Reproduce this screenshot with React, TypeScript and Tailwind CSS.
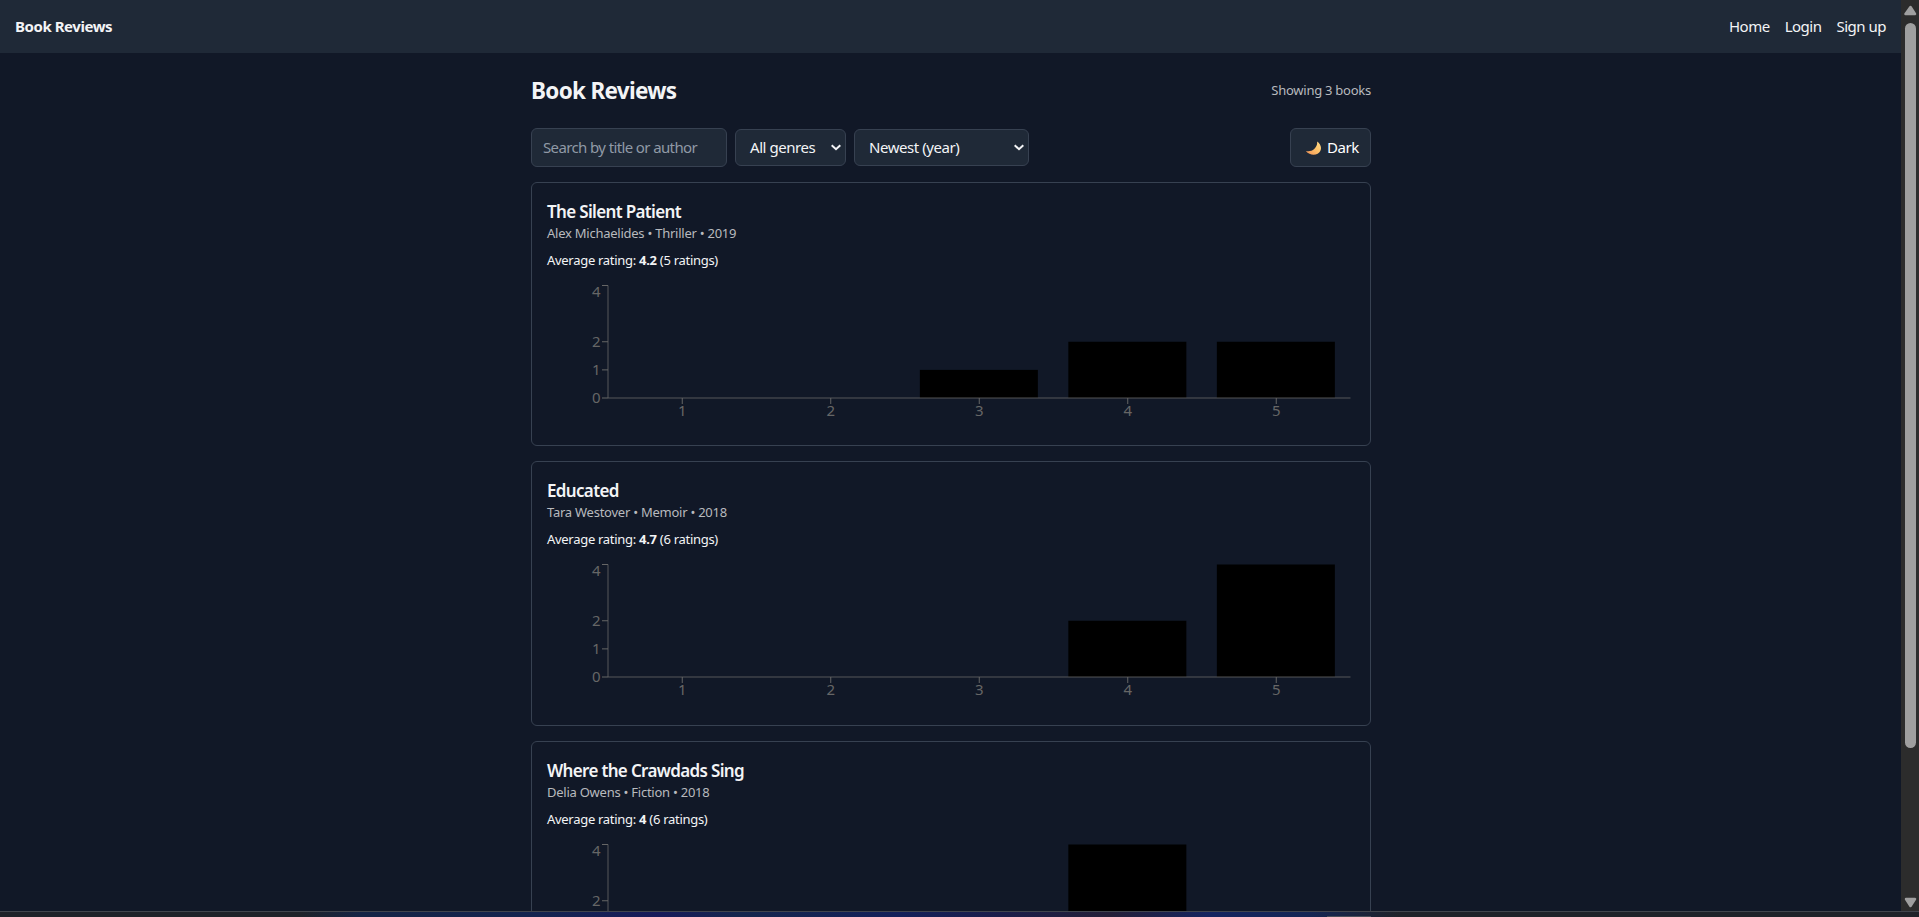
const axisX = 61;
const band = 148.5;

type Book = {
  title: string;
  meta: string;
  average: string;
  count: number;
  ratings: number[];
};

const books: Book[] = [
  { title: "The Silent Patient", meta: "Alex Michaelides • Thriller • 2019", average: "4.2", count: 5, ratings: [0, 0, 1, 2, 2] },
  { title: "Educated", meta: "Tara Westover • Memoir • 2018", average: "4.7", count: 6, ratings: [0, 0, 0, 2, 4] },
  { title: "Where the Crawdads Sing", meta: "Delia Owens • Fiction • 2018", average: "4", count: 6, ratings: [0, 0, 1, 4, 1] },
];

function RatingChart({ ratings }: { ratings: number[] }) {
  const base = 118;
  const unit = 28.125;
  return (
    <svg width="808" height="150" className="block text-[15px]">
      {ratings.map((value, i) => (
        <rect key={i} x={axisX + band * i + 14.85} y={base - value * unit} width={118} height={value * unit} fill="#000" />
      ))}
      <g stroke="#666" fill="none">
        <path d="M61 5.5V118M61 118H803.5" strokeOpacity="0.8" />
        {[0, 1, 2, 4].map((v) => (
          <path key={v} d={`M55 ${base - v * unit}h6`} />
        ))}
        {ratings.map((_, i) => (
          <path key={i} d={`M${axisX + band * (i + 0.5)} 118v6`} />
        ))}
      </g>
      <g fill="#666">
        {[0, 1, 2, 4].map((v) => (
          <text key={v} x="53.5" y={v === 4 ? 17 : base - v * unit + 5} textAnchor="end">{v}</text>
        ))}
        {ratings.map((_, i) => (
          <text key={i} x={axisX + band * (i + 0.5)} y="135.5" textAnchor="middle">{i + 1}</text>
        ))}
      </g>
    </svg>
  );
}

function BookCard({ book }: { book: Book }) {
  return (
    <article className="h-[264.25px] shrink-0 rounded-md border border-[#374151] px-[15px] pt-[17px]">
      <h2 className="text-[17px] leading-[24px] font-semibold tracking-[-0.66px]">{book.title}</h2>
      <p className="text-[13px] leading-[19px] tracking-[-0.25px] text-[#b8babe]">{book.meta}</p>
      <p className="mt-2 text-[13px] leading-[19px] tracking-[-0.29px]">
        Average rating: <strong className="font-bold">{book.average}</strong> ({book.count} ratings)
      </p>
      <div className="mt-[10px]">
        <RatingChart ratings={book.ratings} />
      </div>
    </article>
  );
}

function Chevron() {
  return (
    <svg width="10" height="7" viewBox="0 0 10 7" fill="none" stroke="#f3f4f6" strokeWidth="2">
      <path d="M0.7 1.2L5 5.2L9.3 1.2" />
    </svg>
  );
}

export default function App() {
  return (
    <div className="flex h-[917px] w-[1919px] flex-col overflow-hidden bg-[#111827] font-['Noto_Sans',sans-serif] text-[#f3f4f6]">
      <div className="flex h-[911px] shrink-0">
        <div className="flex w-[1901px] flex-col overflow-hidden">
          <nav className="flex h-[53px] shrink-0 items-center justify-between bg-[#1f2937] px-[15px] text-[15px]">
            <span className="font-bold tracking-[-0.45px]">Book Reviews</span>
            <div className="flex gap-[15px] tracking-[-0.5px]">
              <a>Home</a>
              <a>Login</a>
              <a>Sign up</a>
            </div>
          </nav>
          <main className="ml-[531px] flex w-[840px] flex-col">
            <header className="mt-[21px] flex h-[34px] items-center justify-between">
              <h1 className="text-[22.5px] font-bold tracking-[-0.7px]">Book Reviews</h1>
              <span className="text-[13px] tracking-[-0.25px] text-[#b8babe]">Showing 3 books</span>
            </header>
            <div className="mt-5 flex h-[39px] items-center text-[15px] tracking-[-0.45px]">
              <div className="flex h-[39px] w-[196px] items-center rounded-md border border-[#374151] bg-[#1f2937] px-[11px] text-[#9099a6]">
                <span className="w-[161px] overflow-hidden tracking-[-0.62px] whitespace-nowrap">Search by title or author</span>
              </div>
              <div className="ml-2 flex h-[37px] w-[111px] items-center justify-between rounded-md border border-[#374151] bg-[#1f2937] pr-[4px] pl-[14px]">
                All genres
                <Chevron />
              </div>
              <div className="ml-2 flex h-[37px] w-[175px] items-center justify-between rounded-md border border-[#374151] bg-[#1f2937] pr-[4px] pl-[14px]">
                Newest (year)
                <Chevron />
              </div>
              <button className="ml-auto flex h-[39px] w-[81px] items-center rounded-md border border-[#374151] bg-[#1f2937] pl-[14px] text-white">
                <svg width="17" height="16" viewBox="0 0 17 16">
                  <defs>
                    <linearGradient id="moon" x1="0" y1="1" x2="1" y2="0">
                      <stop offset="0" stopColor="#ef8f55" />
                      <stop offset="0.6" stopColor="#ffc66b" />
                      <stop offset="1" stopColor="#ffd98a" />
                    </linearGradient>
                  </defs>
                  <path d="M12 1.600C15.600 3.800 17 7.700 15.300 11C13.400 15.200 5.500 16.600 0.800 11C3.800 11.600 7 11.200 9.200 9C11.600 6.900 12.600 4.300 12 1.600Z" fill="url(#moon)" />
                </svg>
                <span className="ml-[5px]">Dark</span>
              </button>
            </div>
            <div className="mt-[15px] flex flex-col gap-[15px]">
              {books.map((book) => (
                <BookCard key={book.title} book={book} />
              ))}
            </div>
          </main>
        </div>
        <div className="flex w-[18px] flex-col items-center bg-[#2c2c2c]">
          <svg width="18" height="23" className="shrink-0">
            <path d="M9.500 7L14 14H4.500Z" fill="#9f9f9f" stroke="#9f9f9f" strokeWidth="2.500" strokeLinejoin="round" />
          </svg>
          <div className="ml-[1px] h-[725px] w-[11px] rounded-full bg-[#9f9f9f]" />
          <svg width="18" height="23" className="mt-auto">
            <path d="M9.500 18L14 11H5Z" fill="#9f9f9f" stroke="#9f9f9f" strokeWidth="2.500" strokeLinejoin="round" />
          </svg>
        </div>
      </div>
      <div className="h-[6px] border-t border-[#41454d] bg-[linear-gradient(90deg,#1f2229_0px,#1f2229_300px,#152445_360px,#142450_540px,#171a5a_660px,#15264d_740px,#14205a_900px,#1b1d4a_1000px,#241f38_1110px,#152460_1210px,#152654_1310px,#1f2229_1400px,#1f2229_100%)]">
        <div className="mt-[4px] ml-[1327px] h-[1px] w-[44px] bg-[#4a4f5a]" />
      </div>
    </div>
  );
}
